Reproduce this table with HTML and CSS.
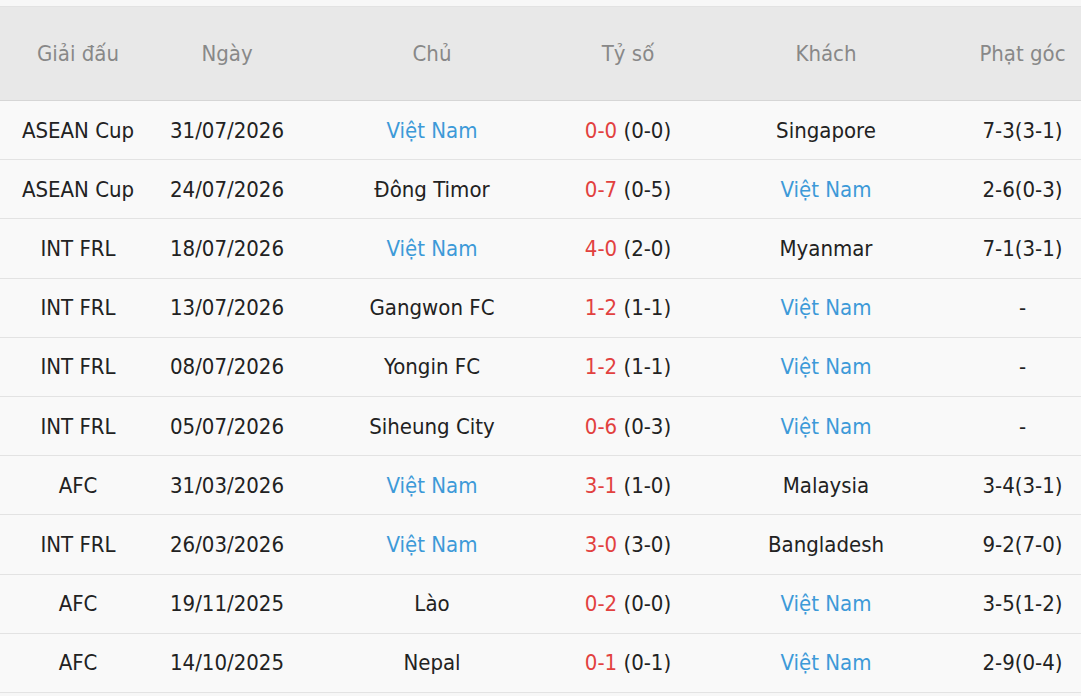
FILE: index.html
```html
<!DOCTYPE html>
<html lang="vi">
<head>
<meta charset="utf-8">
<title>Lịch sử đối đầu</title>
<link rel="stylesheet" href="styles.css">
</head>
<body>
<div class="wrap">
<table class="matches">
  <colgroup>
    <col class="c-league"><col class="c-date"><col class="c-home"><col class="c-score"><col class="c-away"><col class="c-corner">
  </colgroup>
  <thead>
    <tr><th>Giải đấu</th><th>Ngày</th><th>Chủ</th><th>Tỷ số</th><th>Khách</th><th>Phạt góc</th></tr>
  </thead>
  <tbody>
    <tr><td>ASEAN Cup</td><td>31/07/2026</td><td class="team">Việt Nam</td><td><span class="ft">0-0</span> (0-0)</td><td>Singapore</td><td>7-3(3-1)</td></tr>
    <tr><td>ASEAN Cup</td><td>24/07/2026</td><td>Đông Timor</td><td><span class="ft">0-7</span> (0-5)</td><td class="team">Việt Nam</td><td>2-6(0-3)</td></tr>
    <tr><td>INT FRL</td><td>18/07/2026</td><td class="team">Việt Nam</td><td><span class="ft">4-0</span> (2-0)</td><td>Myanmar</td><td>7-1(3-1)</td></tr>
    <tr><td>INT FRL</td><td>13/07/2026</td><td>Gangwon FC</td><td><span class="ft">1-2</span> (1-1)</td><td class="team">Việt Nam</td><td>-</td></tr>
    <tr><td>INT FRL</td><td>08/07/2026</td><td>Yongin FC</td><td><span class="ft">1-2</span> (1-1)</td><td class="team">Việt Nam</td><td>-</td></tr>
    <tr><td>INT FRL</td><td>05/07/2026</td><td>Siheung City</td><td><span class="ft">0-6</span> (0-3)</td><td class="team">Việt Nam</td><td>-</td></tr>
    <tr><td>AFC</td><td>31/03/2026</td><td class="team">Việt Nam</td><td><span class="ft">3-1</span> (1-0)</td><td>Malaysia</td><td>3-4(3-1)</td></tr>
    <tr><td>INT FRL</td><td>26/03/2026</td><td class="team">Việt Nam</td><td><span class="ft">3-0</span> (3-0)</td><td>Bangladesh</td><td>9-2(7-0)</td></tr>
    <tr><td>AFC</td><td>19/11/2025</td><td>Lào</td><td><span class="ft">0-2</span> (0-0)</td><td class="team">Việt Nam</td><td>3-5(1-2)</td></tr>
    <tr><td>AFC</td><td>14/10/2025</td><td>Nepal</td><td><span class="ft">0-1</span> (0-1)</td><td class="team">Việt Nam</td><td>2-9(0-4)</td></tr>
  </tbody>
</table>
</div>
</body>
</html>
```

FILE: styles.css
```css
html, body {
  margin: 0;
  padding: 0;
  background: #f7f7f7;
}
body {
  font-family: "DejaVu Sans Condensed", "DejaVu Sans", sans-serif;
  font-stretch: condensed;
  font-size: 22px;
  color: #222;
}
.wrap {
  padding-top: 6px;
  width: 1081px;
  overflow: hidden;
}
.matches {
  width: 1083px;
  border-collapse: collapse;
  table-layout: fixed;
  border-top: 1px solid #e2e2e2;
  background: #f9f9f9;
}
.c-league { width: 156px; }
.c-date { width: 142px; }
.c-home { width: 268px; }
.c-score { width: 124px; }
.c-away { width: 272px; }
.c-corner { width: 121px; }
.matches th {
  height: 93px;
  padding: 0;
  background: #e8e8e8;
  color: #888;
  font-weight: normal;
  text-align: center;
  border-bottom: 1px solid #d6d6d6;
}
.matches td {
  height: 58.2px;
  padding: 0;
  text-align: center;
  border-bottom: 1px solid #e3e3e3;
  white-space: nowrap;
}
.team { color: #3d9ad8; }
.ft { color: #e2413f; }
```
